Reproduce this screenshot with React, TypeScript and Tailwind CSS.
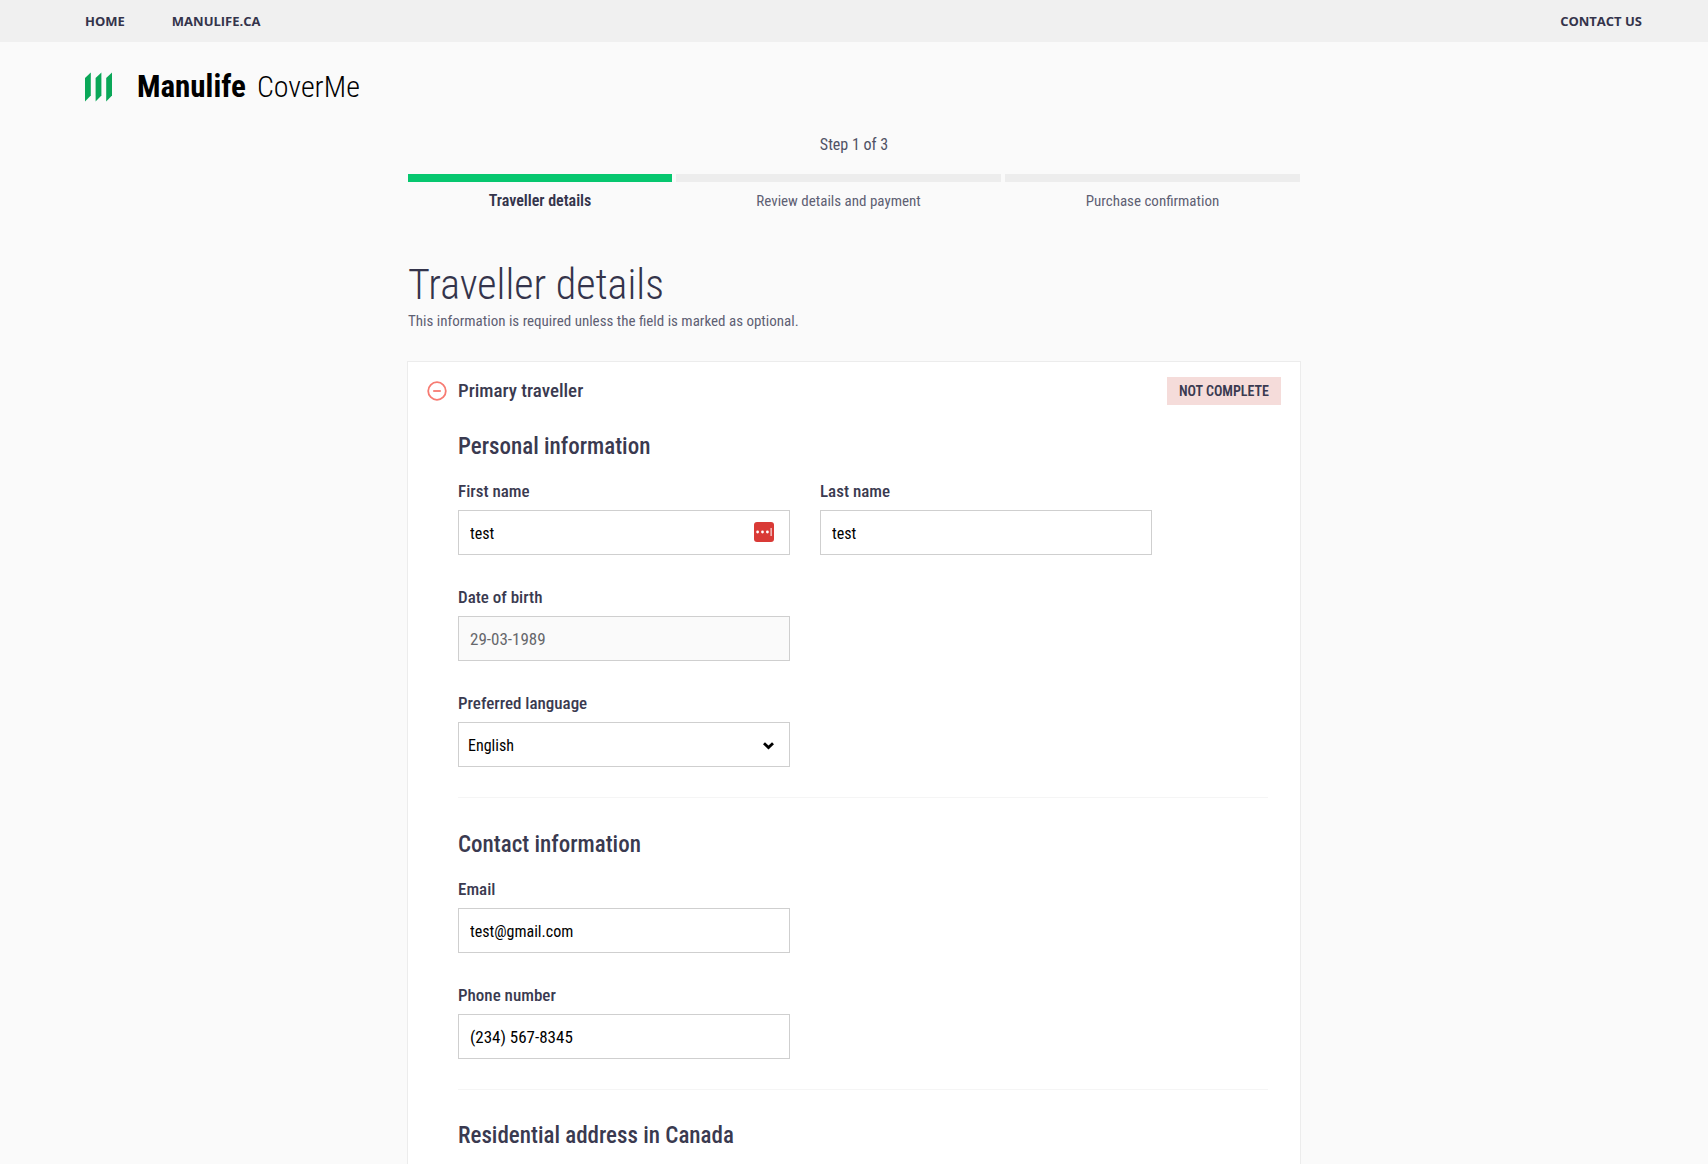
import React, { useId } from "react";

function Logo() {
  return (
    <a href="#" className="flex items-center" aria-label="Manulife CoverMe">
      <svg width="28" height="30" viewBox="0 0 28 30" fill="#0aa758" aria-hidden="true">
        <path d="M0 6 5.8 0.6V23.6L0 29.4Z" />
        <path d="M10.6 6 16.4 0.6V23.6L10.6 29.4Z" />
        <path d="M21.2 6 27 0.6V23.6L21.2 29.4Z" />
      </svg>
      <span className="ml-6 text-[31px] leading-10 font-bold text-black">Manulife</span>
      <span className="ml-[11px] text-[30px] leading-10 font-light text-black">CoverMe</span>
    </a>
  );
}

function Step({ label, active = false }: { label: string; active?: boolean }) {
  return (
    <li className="flex flex-col items-center" aria-current={active ? "step" : undefined}>
      <div className={active ? "h-2 w-full bg-[#06c76f]" : "h-2 w-full bg-[#ededed]"} />
      <span
        className={
          active
            ? "mt-[7px] text-[16px] leading-6 font-semibold text-[#34344b]"
            : "mt-[7px] text-[15px] leading-6 font-normal text-[#5e6073]"
        }
      >
        {label}
      </span>
    </li>
  );
}

function PasswordManagerIcon() {
  return (
    <svg width="20" height="20" viewBox="0 0 20 20" aria-hidden="true">
      <rect width="20" height="20" rx="3" fill="#d93a36" />
      <circle cx="3.6" cy="10" r="1.4" fill="#fff" />
      <circle cx="8.5" cy="10" r="1.4" fill="#fff" />
      <circle cx="13.4" cy="10" r="1.4" fill="#fff" />
      <rect x="16.6" y="6" width="1" height="8" fill="#fff" />
    </svg>
  );
}

type FieldProps = {
  label: string;
  value: string;
  type?: string;
  disabled?: boolean;
  numeric?: boolean;
  icon?: React.ReactNode;
};

function Field({ label, value, type = "text", disabled, numeric, icon }: FieldProps) {
  const id = useId();
  return (
    <div className="w-full max-w-[332px]">
      <label htmlFor={id} className="mb-[7px] block text-[17px] leading-6 font-medium text-[#3a3a50]">
        {label}
      </label>
      <div className="relative">
        <input
          id={id}
          type={type}
          defaultValue={value}
          disabled={disabled}
          className={`block h-[45px] w-full border border-[#cfcfcf] bg-white pr-10 pl-[11px] text-black outline-none disabled:bg-[#fafafa] disabled:text-[#66676b] ${
            numeric ? "text-[17px]" : "pt-0.5 text-[16px]"
          }`}
        />
        {icon && <span className="absolute top-3 right-4">{icon}</span>}
      </div>
    </div>
  );
}

function SelectField({ label, options }: { label: string; options: string[] }) {
  const id = useId();
  return (
    <div className="w-full max-w-[332px]">
      <label htmlFor={id} className="mb-[7px] block text-[17px] leading-6 font-medium text-[#3a3a50]">
        {label}
      </label>
      <div className="relative">
        <select
          id={id}
          className="block h-[45px] w-full appearance-none border border-[#cfcfcf] bg-white pt-0.5 pr-10 pl-[9px] text-[16px] text-black outline-none"
        >
          {options.map((o) => (
            <option key={o}>{o}</option>
          ))}
        </select>
        <svg
          className="pointer-events-none absolute top-5 right-4"
          width="11"
          height="8"
          viewBox="0 0 11 8"
          fill="none"
          stroke="#000"
          strokeWidth="2.8"
          aria-hidden="true"
        >
          <path d="M1 1.2 5.5 5.6 10 1.2" />
        </svg>
      </div>
    </div>
  );
}

function SectionTitle({ children }: { children: React.ReactNode }) {
  return <h3 className="mb-4 text-[23px] leading-8 font-medium text-[#3a3a50]">{children}</h3>;
}

export default function App() {
  return (
    <div className="flex min-h-screen flex-col bg-[#fafafa] font-['Roboto_Condensed',Roboto,sans-serif] text-[#34344b]">
      <nav className="flex h-[42px] items-center bg-[#f0f0f0] pt-px pr-[66px] pl-[85px] font-['Open_Sans',sans-serif] text-[13px] font-bold text-[#34344b]">
        <a href="#">HOME</a>
        <a href="#" className="ml-[47px]">
          MANULIFE.CA
        </a>
        <a href="#" className="ml-auto">
          CONTACT US
        </a>
      </nav>

      <header className="px-[85px] pt-[25px]">
        <Logo />
      </header>

      <main className="mx-auto flex w-full max-w-[894px] grow flex-col">
        <div className="px-px">
          <p className="mt-[26px] text-center text-[16px] leading-6 text-[#505265]">Step 1 of 3</p>
          <ol className="mt-[17px] grid grid-cols-[264fr_325fr_295fr] gap-1">
            <Step label="Traveller details" active />
            <Step label="Review details and payment" />
            <Step label="Purchase confirmation" />
          </ol>

          <h1 className="mt-12 text-[42px] leading-12 font-light">Traveller details</h1>
          <p className="text-[15px] leading-6 text-[#5e6073]">
            This information is required unless the field is marked as optional.
          </p>
        </div>

        <section className="mt-7 grow border border-b-0 border-[#ececec] bg-white">
          <div className="flex items-center pt-[15px] pr-[19px] pl-[19px]">
            <button type="button" aria-expanded="true" className="flex items-center">
              <svg width="20" height="20" viewBox="0 0 20 20" fill="none" stroke="#f77b72" aria-hidden="true">
                <circle cx="10" cy="10" r="8.8" strokeWidth="1.8" />
                <path d="M6.2 10H13.8" strokeWidth="1.8" />
              </svg>
              <span className="ml-[11px] text-[19px] leading-7 font-medium text-[#3a3a50]">Primary traveller</span>
            </button>
            <span className="ml-auto bg-[#f5dcda] px-3 text-[14px] leading-7 font-semibold text-[#3a3a50]">
              NOT COMPLETE
            </span>
          </div>

          <form className="pr-8 pb-10 pl-[50px]">
            <div className="pt-[26px]">
              <SectionTitle>Personal information</SectionTitle>
              <div className="flex flex-col gap-[30px]">
                <div className="flex gap-[30px]">
                  <Field label="First name" value="test" icon={<PasswordManagerIcon />} />
                  <Field label="Last name" value="test" />
                </div>
                <Field label="Date of birth" value="29-03-1989" disabled numeric />
                <SelectField label="Preferred language" options={["English", "French"]} />
              </div>
            </div>

            <div className="mt-[30px] border-t border-[#f5f5f5] pt-[31px]">
              <SectionTitle>Contact information</SectionTitle>
              <div className="flex flex-col gap-[30px]">
                <Field label="Email" value="test@gmail.com" type="email" />
                <Field label="Phone number" value="(234) 567-8345" type="tel" numeric />
              </div>
            </div>

            <div className="mt-[30px] border-t border-[#f5f5f5] pt-[30px]">
              <SectionTitle>Residential address in Canada</SectionTitle>
            </div>
          </form>
        </section>
      </main>
    </div>
  );
}
